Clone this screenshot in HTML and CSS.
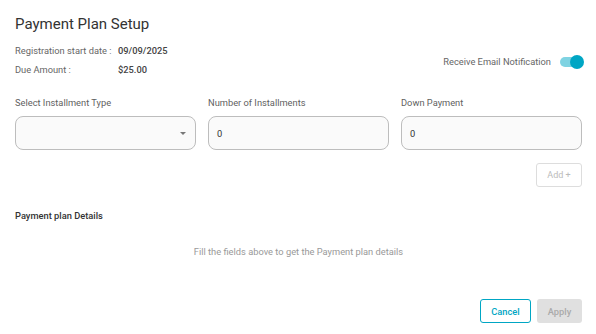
FILE: index.html
```html
<!DOCTYPE html>
<html lang="en">
<head>
    <meta charset="UTF-8">
    <meta name="viewport" content="width=device-width, initial-scale=1.0">
    <title>Payment Plan Setup</title>
    <link rel="stylesheet" href="styles.css">
</head>
<body>
    <div class="dialog">
        <h2 class="title">Payment Plan Setup</h2>

        <div class="summary">
            <div class="info">
                <div class="info-row">
                    <span class="info-label">Registration start date :</span>
                    <span class="info-value">09/09/2025</span>
                </div>
                <div class="info-row">
                    <span class="info-label">Due Amount :</span>
                    <span class="info-value">$25.00</span>
                </div>
            </div>
            <label class="notify">
                <span>Receive Email Notification</span>
                <span class="toggle on"><span class="knob"></span></span>
            </label>
        </div>

        <div class="fields">
            <div class="field">
                <label>Select Installment Type</label>
                <div class="input select">
                    <span></span>
                    <span class="caret"></span>
                </div>
            </div>
            <div class="field">
                <label>Number of Installments</label>
                <div class="input">0</div>
            </div>
            <div class="field">
                <label>Down Payment</label>
                <div class="input">0</div>
            </div>
        </div>

        <div class="add-row">
            <button class="btn-add" disabled>Add +</button>
        </div>

        <h4 class="section-title">Payment plan Details</h4>
        <p class="empty">Fill the fields above to get the Payment plan details</p>

        <div class="actions">
            <button class="btn btn-cancel">Cancel</button>
            <button class="btn btn-apply" disabled>Apply</button>
        </div>
    </div>
</body>
</html>
```

FILE: styles.css
```css
* {
    margin: 0;
    padding: 0;
    box-sizing: border-box;
}

body {
    font-family: Roboto, 'Liberation Sans', sans-serif;
    background: white;
    color: #333;
}

.dialog {
    width: 596px;
    height: 334px;
    padding: 15px 14px 11px 15px;
    display: flex;
    flex-direction: column;
}

.title {
    font-size: 15px;
    font-weight: 400;
    color: #333;
    line-height: 18px;
    margin-bottom: 12px;
}

.summary {
    display: flex;
    justify-content: space-between;
    align-items: center;
}

.info-row {
    display: flex;
    font-size: 9.3px;
    line-height: 12px;
    margin-bottom: 7px;
    white-space: nowrap;
}

.info-label {
    width: 103px;
    color: #666;
}

.info-value {
    color: #444;
    font-weight: 500;
}

.notify {
    display: flex;
    align-items: center;
    gap: 9px;
    font-size: 9.3px;
    color: #666;
    margin-top: -5px;
}

.toggle {
    position: relative;
    width: 22px;
    height: 10px;
    border-radius: 5px;
    background: #7fd3e2;
}

.toggle .knob {
    position: absolute;
    right: -2px;
    top: -2px;
    width: 14px;
    height: 14px;
    border-radius: 50%;
    background: #00a6c4;
}

.fields {
    display: grid;
    grid-template-columns: repeat(3, 1fr);
    gap: 12px;
    margin-top: 14px;
}

.field label {
    display: block;
    font-size: 9.3px;
    color: #5f5f5f;
    line-height: 12px;
    margin-bottom: 7px;
}

.input {
    height: 34px;
    border: 1px solid #bdbdbd;
    border-radius: 8px;
    background: #fafafa;
    font-size: 9.3px;
    color: #333;
    padding: 0 8px;
    display: flex;
    align-items: center;
}

.input.select {
    justify-content: space-between;
    padding-right: 9px;
}

.caret {
    width: 0;
    height: 0;
    border-left: 3.5px solid transparent;
    border-right: 3.5px solid transparent;
    border-top: 3.5px solid #777;
}

.add-row {
    display: flex;
    justify-content: flex-end;
    margin-top: 13px;
}

.btn-add {
    font-family: inherit;
    width: 46px;
    height: 24px;
    font-size: 9px;
    color: #bbb;
    background: white;
    border: 1px solid #ddd;
    border-radius: 3px;
}

.section-title {
    font-size: 9.3px;
    font-weight: 500;
    color: #333;
    margin-top: 23px;
    line-height: 11px;
}

.empty {
    text-align: center;
    font-size: 9.3px;
    line-height: 11px;
    color: #999;
    margin-top: 25px;
}

.actions {
    margin-top: auto;
    display: flex;
    justify-content: flex-end;
    gap: 6px;
}

.btn {
    font-family: inherit;
    height: 24px;
    font-size: 9.3px;
    font-weight: 500;
    border-radius: 3px;
}

.btn-cancel {
    width: 51px;
    background: white;
    color: #00a6c4;
    border: 1px solid #00a6c4;
}

.btn-apply {
    width: 45px;
    background: #e0e0e0;
    color: #aaa;
    border: none;
}
```
